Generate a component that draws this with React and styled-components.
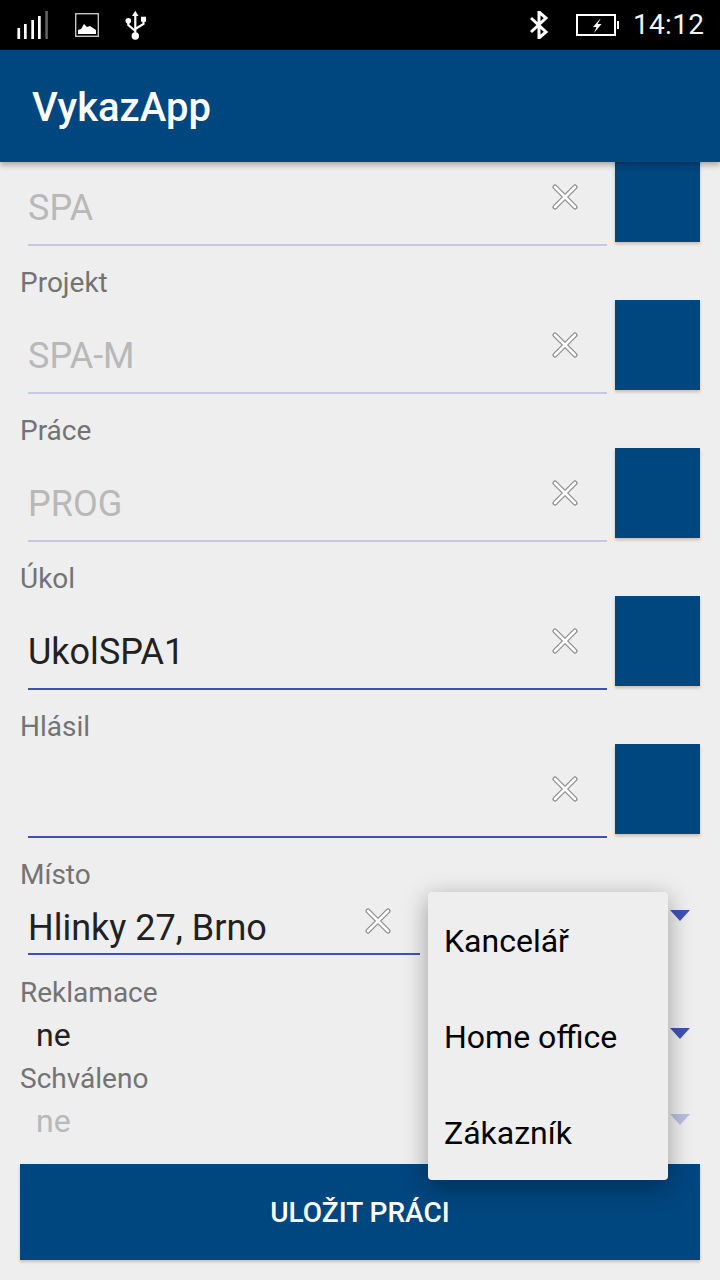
import React from "react";
import styled, { createGlobalStyle } from "styled-components";

const Global = createGlobalStyle`
  html, body { margin: 0; padding: 0; background: #eeeeee; }
  body { font-family: Roboto, "Noto Sans", sans-serif; }
  * { box-sizing: border-box; }
`;

const Page = styled.div`
  width: 720px;
  height: 1280px;
  position: relative;
  overflow: hidden;
  background: #eeeeee;
`;

const StatusBar = styled.div`
  height: 50px;
  background: #000;
  display: flex;
  align-items: center;
  color: #fff;
`;

const StatusIcon = styled.svg`
  display: block;
  flex: none;
  margin-left: ${(p) => p.$left}px;
`;

const Clock = styled.span`
  margin-left: 14px;
  font-size: 28px;
  line-height: 50px;
  letter-spacing: 0.3px;
  color: #f4f4f4;
`;

const AppBar = styled.header`
  height: 112px;
  background: #00467f;
  position: relative;
  z-index: 2;
  display: flex;
  align-items: center;
  padding: 2px 32px 0;
  box-shadow: 0 3px 6px rgba(0, 0, 0, 0.3);
`;

const Title = styled.h1`
  margin: 0;
  font-size: 40px;
  font-weight: 500;
  color: #fff;
`;

const Form = styled.main`
  padding: 0 20px;
  margin-top: -10px;
`;

const Row = styled.div`
  height: ${(p) => (p.$first ? 110 : 148)}px;
`;

const Label = styled.div`
  height: 38px;
  font-size: 28px;
  line-height: 42px;
  color: #737373;
`;

const Body = styled.div`
  display: flex;
  justify-content: space-between;
`;

const Field = styled.div`
  position: relative;
  width: ${(p) => p.$w}px;
  height: ${(p) => p.$h}px;
  margin-left: 8px;
  border-bottom: 2px solid ${(p) => (p.$off ? "#c6c7e6" : "#3f51b5")};
  padding-top: ${(p) => p.$top}px;
  font-size: 36px;
  line-height: 42px;
  color: ${(p) => (p.$off ? "#b8b8b8" : "#212121")};
`;

const Clear = styled.svg`
  position: absolute;
  right: 29px;
  top: ${(p) => p.$top}px;
`;

const Square = styled.div`
  width: 85px;
  height: 90px;
  background: #00467f;
  box-shadow: 0 2px 3px rgba(0, 0, 0, 0.2);
`;

const PlaceRow = styled.div`
  height: 120px;
`;

const Spinner = styled.div`
  height: ${(p) => p.$h}px;
  display: flex;
  justify-content: space-between;
  padding: 0 10px 0 16px;
  font-size: 32px;
  line-height: ${(p) => p.$h - 2}px;
  color: ${(p) => (p.$off ? "#b8b8b8" : "#212121")};
`;

const Arrow = styled.i`
  width: 0;
  height: 0;
  margin-top: ${(p) => p.$top}px;
  border-left: 10px solid transparent;
  border-right: 10px solid transparent;
  border-top: 11px solid ${(p) => (p.$off ? "#b9bee0" : "#3f51b5")};
`;

const PlaceBody = styled.div`
  display: flex;
  justify-content: space-between;
  height: 63px;
`;

const PlaceArrow = styled(Arrow)`
  margin-right: 10px;
`;

const SpinnerLabel = styled(Label)`
  line-height: 38px;
`;

const SaveButton = styled.button`
  display: block;
  width: 100%;
  height: 96px;
  margin-top: 18px;
  border: 0;
  background: #00467f;
  color: #fff;
  font-family: inherit;
  font-size: 28px;
  font-weight: 500;
  box-shadow: 0 2px 3px rgba(0, 0, 0, 0.2);
`;

const Menu = styled.ul`
  position: absolute;
  z-index: 3;
  left: 428px;
  top: 892px;
  width: 240px;
  height: 288px;
  margin: 0;
  padding: 0;
  list-style: none;
  background: #eeeeee;
  border-radius: 4px;
  box-shadow: 0 6px 24px rgba(0, 0, 0, 0.35);
`;

const MenuItem = styled.li`
  height: 96px;
  padding-left: 16px;
  font-size: 32px;
  line-height: 98px;
  color: #000;
`;

const ClearIcon = ({ top }) => (
  <Clear $top={top} width="26" height="26" viewBox="0 0 26 26">
    <path d="M3 3 L23 23 M23 3 L3 23" stroke="#8c8c8c" strokeWidth="5" strokeLinecap="round" />
    <path d="M3 3 L23 23 M23 3 L3 23" stroke="#fff" strokeWidth="2.6" strokeLinecap="round" />
  </Clear>
);

const fields = [
  { label: "Projekt", value: "SPA-M", off: true },
  { label: "Práce", value: "PROG", off: true },
  { label: "Úkol", value: "UkolSPA1" },
  { label: "Hlásil", value: "" },
];

export default function App() {
  return (
    <Page>
      <Global />
      <StatusBar>
        <StatusIcon $left={17} width="32" height="30" viewBox="0 0 32 30">
          <path d="M0.4 18h2.7v11H0.4zM7 14h2.7v15H7zM14.3 10h2.7v19h-2.7zM21 6h2.7v23H21z" fill="#fff" />
          <path d="M28.3 1h2.5v28h-2.5z" fill="#666" />
        </StatusIcon>
        <StatusIcon $left={26} width="24" height="24" viewBox="0 0 24 24">
          <rect x="0.7" y="0.7" width="22.6" height="22.6" fill="none" stroke="#c4c4c4" strokeWidth="1.4" />
          <path d="M3 21v-4l3-1 3-5 3 3 3-1 3 2 3 2v4z" fill="#fff" />
        </StatusIcon>
        <StatusIcon $left={26} width="22" height="30" viewBox="0 0 22 30">
          <path d="M10.3 0.7l3.3 5.3H7z" fill="#fff" />
          <path d="M10.3 5v21M3.3 11v4l7 6M18.5 11v3l-8.2 5" fill="none" stroke="#fff" strokeWidth="2.2" />
          <circle cx="10.3" cy="26" r="3.7" fill="#fff" />
          <circle cx="3.3" cy="10.7" r="2.8" fill="#fff" />
          <path d="M16 6.7h5v5h-5z" fill="#fff" />
        </StatusIcon>
        <StatusIcon $left={383} width="19" height="28" viewBox="0 0 19 28">
          <path d="M1 7l15 14-7 6V1l7 6L1 21" fill="none" stroke="#fff" strokeWidth="3" />
        </StatusIcon>
        <StatusIcon $left={27} width="43" height="22" viewBox="0 0 43 22">
          <rect x="1" y="1" width="38" height="20" fill="none" stroke="#fff" strokeWidth="2" />
          <path d="M41 7h2v8h-2z" fill="#fff" />
          <path d="M24 5l-7 8h3.5l-2.5 6 7.5-9h-4l3-5z" fill="#fff" />
        </StatusIcon>
        <Clock>14:12</Clock>
      </StatusBar>
      <AppBar>
        <Title>VykazApp</Title>
      </AppBar>
      <Form>
        <Row $first>
          <Body>
            <Field $off $w={579} $h={94} $top={35}>
              SPA
              <ClearIcon top={32} />
            </Field>
            <Square />
          </Body>
        </Row>
        {fields.map((f) => (
          <Row key={f.label}>
            <Label>{f.label}</Label>
            <Body>
              <Field $off={f.off} $w={579} $h={94} $top={35}>
                {f.value}
                <ClearIcon top={32} />
              </Field>
              <Square />
            </Body>
          </Row>
        ))}
        <PlaceRow>
          <Label>Místo</Label>
          <PlaceBody>
            <Field $w={392} $h={63} $top={15}>
              Hlinky 27, Brno
              <ClearIcon top={16} />
            </Field>
            <PlaceArrow $top={18} />
          </PlaceBody>
        </PlaceRow>
        <SpinnerLabel>Reklamace</SpinnerLabel>
        <Spinner $h={48}>
          ne
          <Arrow $top={16} />
        </Spinner>
        <SpinnerLabel>Schváleno</SpinnerLabel>
        <Spinner $off $h={48}>
          ne
          <Arrow $off $top={16} />
        </Spinner>
        <SaveButton>ULOŽIT PRÁCI</SaveButton>
      </Form>
      <Menu>
        <MenuItem>Kancelář</MenuItem>
        <MenuItem>Home office</MenuItem>
        <MenuItem>Zákazník</MenuItem>
      </Menu>
    </Page>
  );
}
